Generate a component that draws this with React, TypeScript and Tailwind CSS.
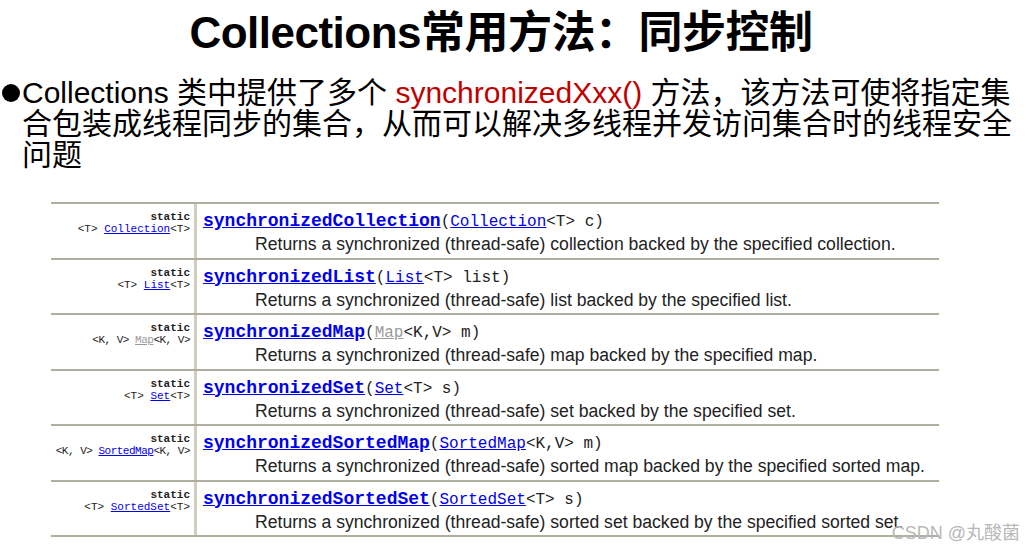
import React from 'react';

type Part = { text: string; link?: boolean; gray?: boolean };

type Row = {
  type: Part[];
  tight?: boolean;
  name: string;
  params: Part[];
  desc: string;
};

const ROWS: Row[] = [
  {
    type: [{ text: '<T> ' }, { text: 'Collection', link: true }, { text: '<T>' }],
    name: 'synchronizedCollection',
    params: [{ text: '(' }, { text: 'Collection', link: true }, { text: '<T> c)' }],
    desc: 'Returns a synchronized (thread-safe) collection backed by the specified collection.',
  },
  {
    type: [{ text: '<T> ' }, { text: 'List', link: true }, { text: '<T>' }],
    name: 'synchronizedList',
    params: [{ text: '(' }, { text: 'List', link: true }, { text: '<T> list)' }],
    desc: 'Returns a synchronized (thread-safe) list backed by the specified list.',
  },
  {
    type: [{ text: '<K, V> ' }, { text: 'Map', link: true, gray: true }, { text: '<K, V>' }],
    tight: true,
    name: 'synchronizedMap',
    params: [{ text: '(' }, { text: 'Map', link: true, gray: true }, { text: '<K,V> m)' }],
    desc: 'Returns a synchronized (thread-safe) map backed by the specified map.',
  },
  {
    type: [{ text: '<T> ' }, { text: 'Set', link: true }, { text: '<T>' }],
    name: 'synchronizedSet',
    params: [{ text: '(' }, { text: 'Set', link: true }, { text: '<T> s)' }],
    desc: 'Returns a synchronized (thread-safe) set backed by the specified set.',
  },
  {
    type: [{ text: '<K, V> ' }, { text: 'SortedMap', link: true }, { text: '<K, V>' }],
    tight: true,
    name: 'synchronizedSortedMap',
    params: [{ text: '(' }, { text: 'SortedMap', link: true }, { text: '<K,V> m)' }],
    desc: 'Returns a synchronized (thread-safe) sorted map backed by the specified sorted map.',
  },
  {
    type: [{ text: '<T> ' }, { text: 'SortedSet', link: true }, { text: '<T>' }],
    name: 'synchronizedSortedSet',
    params: [{ text: '(' }, { text: 'SortedSet', link: true }, { text: '<T> s)' }],
    desc: 'Returns a synchronized (thread-safe) sorted set backed by the specified sorted set.',
  },
];

const Parts: React.FC<{ parts: Part[] }> = ({ parts }) => (
  <>
    {parts.map((p, i) =>
      p.link ? (
        <span key={i} className={p.gray ? 'text-[#9a9a9a] underline' : 'text-[#0000ee] underline'}>
          {p.text}
        </span>
      ) : (
        <span key={i}>{p.text}</span>
      ),
    )}
  </>
);

const App: React.FC = () => {
  return (
    <div className="relative w-[1036px] h-[550px] overflow-hidden bg-white text-black font-['Liberation_Sans','Noto_Sans_CJK_SC',sans-serif]">
      <div className="flex justify-center pr-[34px] pt-[7px] h-[60px]">
        <h1 className="text-[44px] leading-[52px] font-bold tracking-[-0.5px]">Collections常用方法：同步控制</h1>
      </div>

      <div className="mt-[17px] flex text-[30px] leading-[31px] text-black">
        <span className="w-[22px] shrink-0 pl-[2px] pt-[7px]">
          <span className="block w-[18px] h-[18px] rounded-full bg-black" />
        </span>
        <p className="whitespace-nowrap">
          Collections 类中提供了多个 <span className="text-[#c00000]">synchronizedXxx()</span> 方法，该方法可使将指定集
          <br />
          合包装成线程同步的集合，从而可以解决多线程并发访问集合时的线程安全
          <br />
          问题
        </p>
      </div>

      <div className="ml-[51px] mt-[32px] w-[888px] border-t-2 border-[#b0ae9f]">
        {ROWS.map((row) => (
          <div key={row.name} className="flex h-[55.5px] border-b-2 border-[#b0ae9f]">
            <div className="w-[146px] shrink-0 border-r-[3px] border-[#d0cdc0] pr-[4px] pt-[7px] text-right font-['Liberation_Mono',monospace] text-[11px] text-[#222]">
              <div className="leading-[12px] font-bold">static</div>
              <div className={row.tight ? 'leading-[13px] whitespace-nowrap tracking-[-0.5px]' : 'leading-[13px] whitespace-nowrap'}>
                <Parts parts={row.type} />
              </div>
            </div>
            <div className="flex-1 pl-[6px] pt-[8px]">
              <div className="whitespace-nowrap leading-[18px] font-['Liberation_Mono',monospace] text-[#222]">
                <span className="text-[18px] font-bold text-[#0000ee] underline">{row.name}</span>
                <span className="text-[16px]">
                  <Parts parts={row.params} />
                </span>
              </div>
              <div className="mt-[3px] pl-[52px] whitespace-nowrap text-[17.6px] leading-[20px] text-[#222]">
                {row.desc}
              </div>
            </div>
          </div>
        ))}
      </div>

      <div className="absolute right-[16px] bottom-[6px] text-[18px] leading-[22px] text-[#b8b8b8] font-['Liberation_Sans','Noto_Sans_CJK_SC',sans-serif]">
        CSDN @丸酸菌
      </div>
    </div>
  );
};

export default App;
